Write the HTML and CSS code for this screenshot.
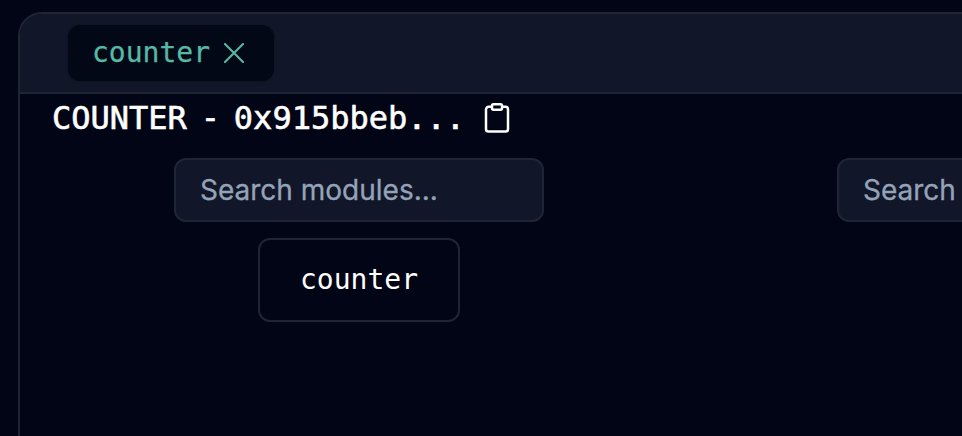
FILE: index.html
```html
<!DOCTYPE html>
<html lang="en">
<head>
<meta charset="utf-8">
<title>Counter</title>
<link rel="stylesheet" href="styles.css">
</head>
<body>
<main class="panel">
  <nav class="tabs">
    <div class="tab"><span>counter</span>
      <svg class="close" viewBox="0 0 20 20"><path d="M1 1 19 19M19 1 1 19"/></svg>
    </div>
  </nav>
  <header class="title">
    <h1>COUNTER - 0x915bbeb...</h1>
    <svg class="clipboard" viewBox="0 0 26 30"><path d="M8 3.800H4.600a2.600 2.600 0 0 0-2.600 2.600v19.500a2.600 2.600 0 0 0 2.600 2.600h16.800a2.600 2.600 0 0 0 2.600-2.600V6.400a2.600 2.600 0 0 0-2.600-2.600H18"/><rect x="8" y="1.300" width="10" height="5.400" rx="1.400"/></svg>
  </header>
  <div class="columns">
    <section class="column">
      <input class="search" placeholder="Search modules...">
      <button class="module">counter</button>
    </section>
    <section class="column">
      <input class="search" placeholder="Search">
    </section>
  </div>
</main>
</body>
</html>
```
FILE: styles.css
```css
* { box-sizing: border-box; }
html { overflow: hidden; }
body {
  margin: 0;
  padding: 12px 0 0 18px;
  height: 436px;
  overflow: hidden;
  background: #020515;
  color: #fff;
  font-family: Inter, sans-serif;
}
.panel {
  height: 424px;
  border: 2px solid #1e2635;
  border-width: 2px 0 0 2px;
  border-radius: 24px 0 0 0;
  overflow: hidden;
}
.tabs {
  height: 80px;
  padding: 11px 48px;
  display: flex;
  background: #111628;
  border-bottom: 2px solid #1e2635;
}
.tab {
  width: 206px;
  height: 56px;
  padding: 0 0 1px 24px;
  display: flex;
  align-items: center;
  gap: 14px;
  border-radius: 12px;
  background: #020815;
  color: #57b9a5;
  font: 28px "DejaVu Sans Mono", monospace;
  box-shadow: 0 1px 3px rgba(0, 0, 0, 0.15);
}
.tab span { margin-top: -1px; -webkit-text-stroke: 0.250px currentColor; }
.close {
  width: 20px;
  height: 20px;
  margin-top: 1px;
  fill: none;
  stroke: currentColor;
  stroke-width: 2.1;
  stroke-linecap: round;
}
.title {
  height: 48px;
  padding-left: 32px;
  display: flex;
  align-items: center;
  gap: 19px;
}
.title h1 {
  margin: 0;
  font: 32px "DejaVu Sans Mono", monospace;
  word-spacing: -5.400px;
  -webkit-text-stroke: 0.600px #fff;
}
.clipboard { width: 26px; height: 30px; fill: none; stroke: #fff; stroke-width: 2.5; }
.columns {
  display: grid;
  grid-template-columns: 370px 370px;
  column-gap: 293px;
  padding: 16px 0 0 154px;
}
.column { display: flex; flex-direction: column; align-items: center; gap: 16px; }
.search {
  width: 370px;
  height: 64px;
  padding: 0 24px;
  border: 2px solid #1e2635;
  border-radius: 12px;
  background: #111628;
  font: 28px Inter, sans-serif;
}
.search::placeholder { color: #94a3b8; opacity: 1; -webkit-text-stroke: 0.300px #94a3b8; }
.module {
  width: 202px;
  height: 84px;
  padding: 0 0 2px;
  border: 2px solid #1e2635;
  border-radius: 12px;
  background: transparent;
  color: #fff;
  font: 28px "DejaVu Sans Mono", monospace;
}
```
